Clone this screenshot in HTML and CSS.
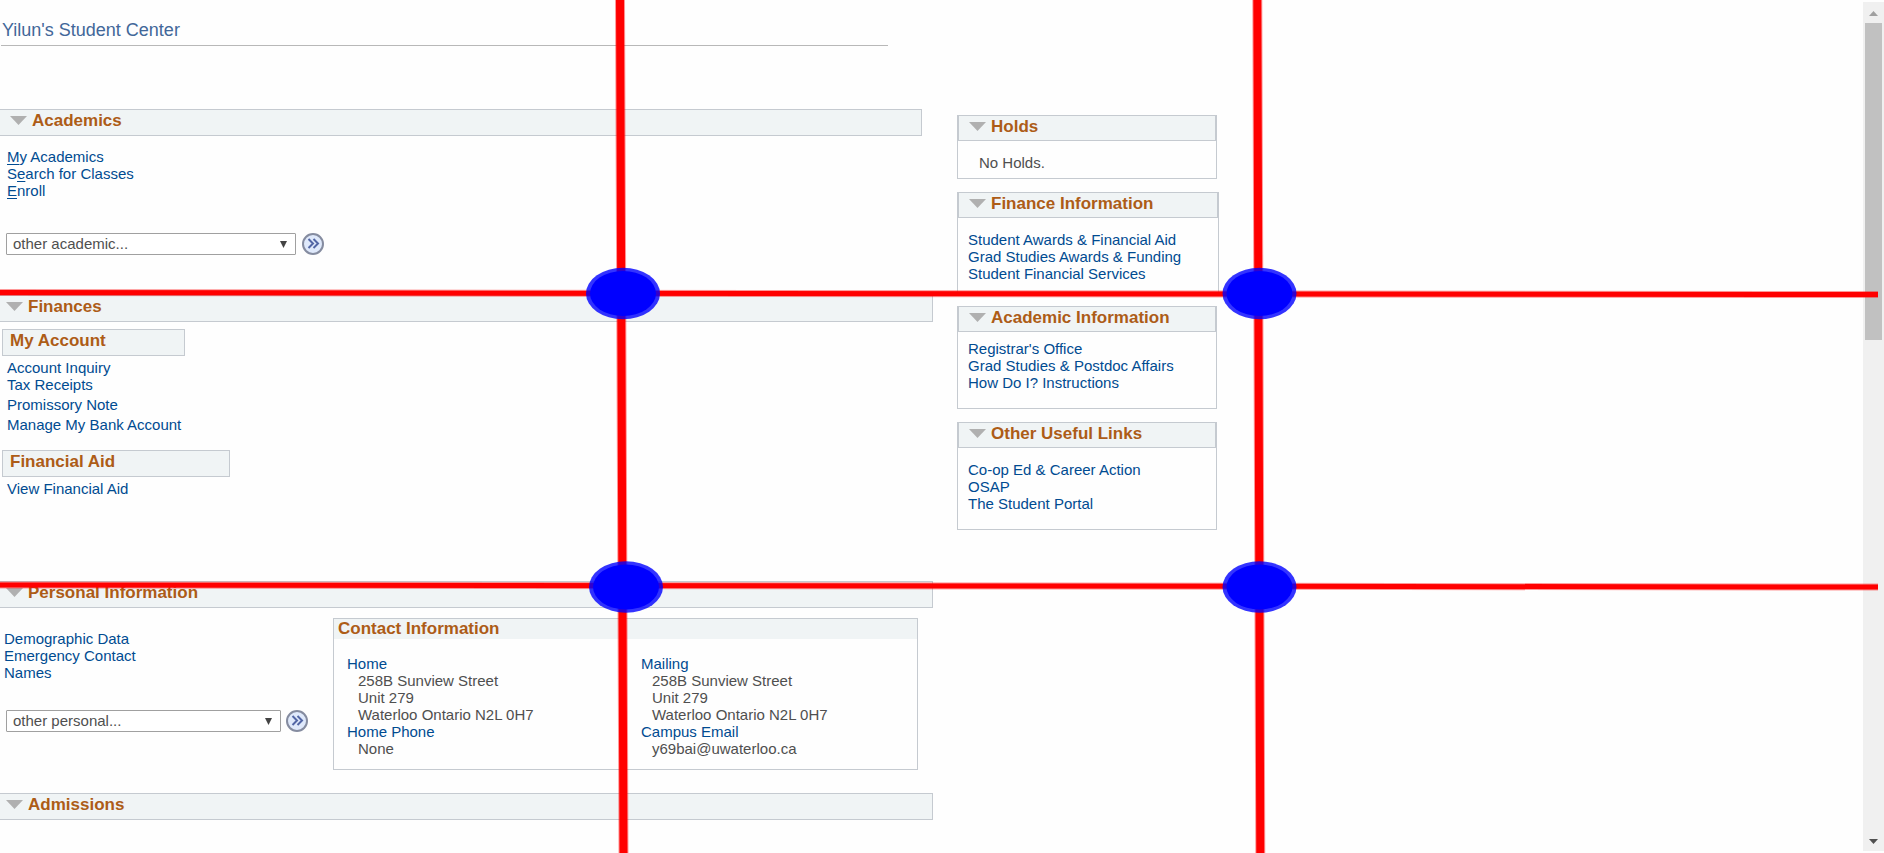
FILE: index.html
```html
<!DOCTYPE html>
<html lang="en">
<head>
<meta charset="utf-8">
<title>Student Center</title>
<link rel="stylesheet" href="styles.css">
</head>
<body>
<div class="page">
  <div class="content">
    <main class="main">
      <h1 class="title">Yilun's Student Center</h1>

      <section class="academics">
        <h2 class="bar bar-inset"><svg class="tri" viewBox="0 0 17 9"><path d="M0 0H17L8.500 9Z"/></svg>Academics</h2>
        <ul class="links">
          <li><a href="#"><u>M</u>y Academics</a></li>
          <li><a href="#">S<u>e</u>arch for Classes</a></li>
          <li><a href="#"><u>E</u>nroll</a></li>
        </ul>
        <div class="picker">
          <span class="select-wrap wide">
            <select class="select" aria-label="Other academic"><option>other academic...</option></select>
            <svg class="caret" viewBox="0 0 8 8"><path d="M0 0H8L4 8Z"/></svg>
          </span>
          <button class="go" type="button" aria-label="Go"><svg viewBox="0 0 22 22"><circle cx="11" cy="11" r="10"/><path d="M6.500 6L11 10.500L6.500 15M11.500 6L16 10.500L11.500 15"/></svg></button>
        </div>
      </section>

      <section class="finances">
        <h2 class="bar"><svg class="tri" viewBox="0 0 17 9"><path d="M0 0H17L8.500 9Z"/></svg>Finances</h2>
        <h3 class="subbar account">My Account</h3>
        <ul class="links account-links">
          <li><a href="#">Account Inquiry</a></li>
          <li><a href="#">Tax Receipts</a></li>
          <li class="spaced"><a href="#">Promissory Note</a></li>
          <li class="spaced"><a href="#">Manage My Bank Account</a></li>
        </ul>
        <h3 class="subbar aid">Financial Aid</h3>
        <ul class="links"><li><a href="#">View Financial Aid</a></li></ul>
      </section>

      <section class="personal">
        <h2 class="bar"><svg class="tri" viewBox="0 0 17 9"><path d="M0 0H17L8.500 9Z"/></svg>Personal Information</h2>
        <div class="personal-body">
          <div class="personal-side">
            <ul class="links">
              <li><a href="#">Demographic Data</a></li>
              <li><a href="#">Emergency Contact</a></li>
              <li><a href="#">Names</a></li>
            </ul>
            <div class="picker">
              <span class="select-wrap">
                <select class="select" aria-label="Other personal"><option>other personal...</option></select>
                <svg class="caret" viewBox="0 0 8 8"><path d="M0 0H8L4 8Z"/></svg>
              </span>
              <button class="go" type="button" aria-label="Go"><svg viewBox="0 0 22 22"><circle cx="11" cy="11" r="10"/><path d="M6.500 6L11 10.500L6.500 15M11.500 6L16 10.500L11.500 15"/></svg></button>
            </div>
          </div>
          <div class="contact">
            <h3 class="contact-head">Contact Information</h3>
            <div class="contact-grid">
              <dl class="details">
                <dt><a href="#">Home</a></dt>
                <dd>258B Sunview Street<br>Unit 279<br>Waterloo Ontario N2L 0H7</dd>
                <dt><a href="#">Home Phone</a></dt>
                <dd>None</dd>
              </dl>
              <dl class="details">
                <dt><a href="#">Mailing</a></dt>
                <dd>258B Sunview Street<br>Unit 279<br>Waterloo Ontario N2L 0H7</dd>
                <dt><a href="#">Campus Email</a></dt>
                <dd>y69bai@uwaterloo.ca</dd>
              </dl>
            </div>
          </div>
        </div>
      </section>

      <section class="admissions">
        <h2 class="bar"><svg class="tri" viewBox="0 0 17 9"><path d="M0 0H17L8.500 9Z"/></svg>Admissions</h2>
      </section>
    </main>

    <aside class="side">
      <section class="card">
        <h2 class="card-head"><svg class="tri" viewBox="0 0 17 9"><path d="M0 0H17L8.500 9Z"/></svg>Holds</h2>
        <p class="note">No Holds.</p>
      </section>
      <section class="card card-wide">
        <h2 class="card-head"><svg class="tri" viewBox="0 0 17 9"><path d="M0 0H17L8.500 9Z"/></svg>Finance Information</h2>
        <ul class="card-links short">
          <li><a href="#">Student Awards &amp; Financial Aid</a></li>
          <li><a href="#">Grad Studies Awards &amp; Funding</a></li>
          <li><a href="#">Student Financial Services</a></li>
        </ul>
      </section>
      <section class="card">
        <h2 class="card-head"><svg class="tri" viewBox="0 0 17 9"><path d="M0 0H17L8.500 9Z"/></svg>Academic Information</h2>
        <ul class="card-links tight">
          <li><a href="#">Registrar's Office</a></li>
          <li><a href="#">Grad Studies &amp; Postdoc Affairs</a></li>
          <li><a href="#">How Do I? Instructions</a></li>
        </ul>
      </section>
      <section class="card">
        <h2 class="card-head"><svg class="tri" viewBox="0 0 17 9"><path d="M0 0H17L8.500 9Z"/></svg>Other Useful Links</h2>
        <ul class="card-links">
          <li><a href="#">Co-op Ed &amp; Career Action</a></li>
          <li><a href="#">OSAP</a></li>
          <li><a href="#">The Student Portal</a></li>
        </ul>
      </section>
    </aside>
  </div>

  <div class="scrollbar">
    <svg class="arrow up" viewBox="0 0 9 5"><path d="M4.500 0L9 5H0Z"/></svg>
    <div class="thumb"></div>
    <svg class="arrow down" viewBox="0 0 9 5"><path d="M0 0H9L4.500 5Z"/></svg>
  </div>

  <svg class="overlay" viewBox="0 0 1884 853" preserveAspectRatio="none" aria-hidden="true">
    <g class="lines soft">
      <path class="v" d="M620 0L623.500 853M1257.300 0L1260.300 853"/>
      <path class="h" d="M0 292.600L1878 294.600M0 585L1878 587"/>
    </g>
    <g class="lines solid">
      <path class="v" d="M620 0L623.500 853M1257.300 0L1260.300 853"/>
      <path class="h" d="M0 292.600L1878 294.600M0 585L1878 587"/>
    </g>
    <g class="dots-soft">
      <ellipse cx="623" cy="293.500" rx="37" ry="25.700"/><ellipse cx="1259.500" cy="293.500" rx="37" ry="25.700"/>
      <ellipse cx="626" cy="587" rx="37" ry="25.700"/><ellipse cx="1259.500" cy="587" rx="37" ry="25.700"/>
    </g>
    <g class="dots">
      <ellipse cx="623" cy="293.500" rx="33" ry="22.500"/><ellipse cx="1259.500" cy="293.500" rx="33" ry="22.500"/>
      <ellipse cx="626" cy="587" rx="33" ry="22.500"/><ellipse cx="1259.500" cy="587" rx="33" ry="22.500"/>
    </g>
  </svg>
</div>
</body>
</html>
```
FILE: styles.css
```css
* { box-sizing: border-box; }
body {
  margin: 0;
  background: #fefefe;
  color: #4f4f4f;
  font: 15px/17px "Liberation Sans", Arial, sans-serif;
}
h1, h2, h3, p, ul, dl, dd { margin: 0; padding: 0; }
ul { list-style: none; }
a { color: #004b91; text-decoration: none; }

.page { position: relative; display: flex; min-height: 100vh; overflow: hidden; }
.content {
  flex: 1;
  display: grid;
  grid-template-columns: 933fr 262fr 620fr;
  column-gap: 24px;
  align-items: start;
}

.title {
  margin: 0 45px 63px 1px;
  padding: 19px 0 3px 1px;
  border-bottom: 1px solid #b8b8b8;
  color: #426799;
  font-size: 18px;
  font-weight: 400;
  line-height: 23px;
}
.bar, .subbar, .card-head, .contact-head {
  color: #ad5c17;
  background: #f0f4f5;
  font-size: 17px;
  font-weight: 700;
  line-height: 20px;
}
.bar {
  display: flex;
  align-items: flex-start;
  gap: 5px;
  height: 27px;
  padding: 1px 6px;
  border: 1px solid #c5cad0;
  border-left: 0;
}
.bar-inset { margin-right: 11px; padding-left: 10px; }
.tri { width: 17px; height: 9px; margin-top: 5px; fill: #b0b0b0; flex: none; }
.links { padding-left: 7px; }

.academics { margin-bottom: 40px; }
.academics .links { margin: 12px 0 34px; }
.academics u { text-underline-offset: 2px; }
.picker { display: flex; gap: 6px; padding-left: 6px; }
.select-wrap { position: relative; width: 275px; }
.select-wrap.wide { width: 290px; }
.select {
  display: block;
  appearance: none;
  width: 100%;
  height: 22px;
  padding: 0 6px 2px;
  border: 1px solid #a0a0a0;
  border-radius: 1px;
  background: #fff;
  color: #4f4f4f;
  font: inherit;
}
.caret { position: absolute; right: 9px; top: 8px; width: 7px; height: 7px; fill: #444; }
.go { width: 22px; height: 22px; padding: 0; border: 0; background: none; }
.go svg { display: block; width: 22px; height: 22px; fill: #dfe9fb; stroke: #858ca0; stroke-width: 2; }
.go path { fill: none; stroke: #5266a5; }

.finances { margin-bottom: 84px; }
.subbar {
  height: 27px;
  margin-left: 2px;
  padding: 1px 7px;
  border: 1px solid #c5cad0;
}
.account { width: 183px; margin-top: 7px; }
.aid { width: 228px; margin-top: 17px; }
.finances .links { padding-top: 3px; }
.spaced { margin-top: 3px; }

.personal-body { display: flex; justify-content: space-between; padding: 10px 15px 23px 0; }
.personal-side { padding-top: 12px; }
.personal-side .links { padding-left: 4px; margin-bottom: 29px; }
.personal-side .picker { gap: 5px; }
.contact { width: 585px; border: 1px solid #c5cad0; }
.contact-head { padding: 0 4px; }
.contact-grid { display: grid; grid-template-columns: 294fr 276fr; padding: 16px 0 12px 13px; }
.details dd { padding-left: 11px; }

.side { display: grid; gap: 13px; padding-top: 115px; }
.card { border: 1px solid #c5cad0; margin-right: 2px; }
.card-wide { margin-right: 0; }
.card-head {
  display: flex;
  gap: 5px;
  height: 25px;
  padding: 1px 10px;
  border: 1px solid #c5cad0;
  border-top: 0;
}
.card-links { padding: 13px 10px 17px; }
.card-links.tight { padding-top: 8px; }
.card-links.short { padding-bottom: 10px; }
.note { padding: 13px 21px 7px; }

.scrollbar {
  display: flex;
  flex-direction: column;
  align-items: center;
  width: 21px;
  margin: 2px 0;
  padding: 9px 0 7px;
  background: #f0f0f0;
}
.arrow { width: 9px; height: 5px; flex: none; }
.up { fill: #a0a0a0; }
.down { fill: #505050; margin-top: auto; }
.thumb { width: 17px; height: 38%; margin-top: 7px; background: #c1c1c1; }

.overlay { position: absolute; inset: 0; width: 100%; height: 100%; pointer-events: none; }
.lines { stroke: #f00; fill: none; }
.soft { opacity: .4; }
.soft .v { stroke-width: 10; }
.soft .h { stroke-width: 7; }
.solid .v { stroke-width: 8; }
.solid .h { stroke-width: 5; }
.dots-soft { fill: #00f; opacity: .8; }
.dots { fill: #00f; }
```
